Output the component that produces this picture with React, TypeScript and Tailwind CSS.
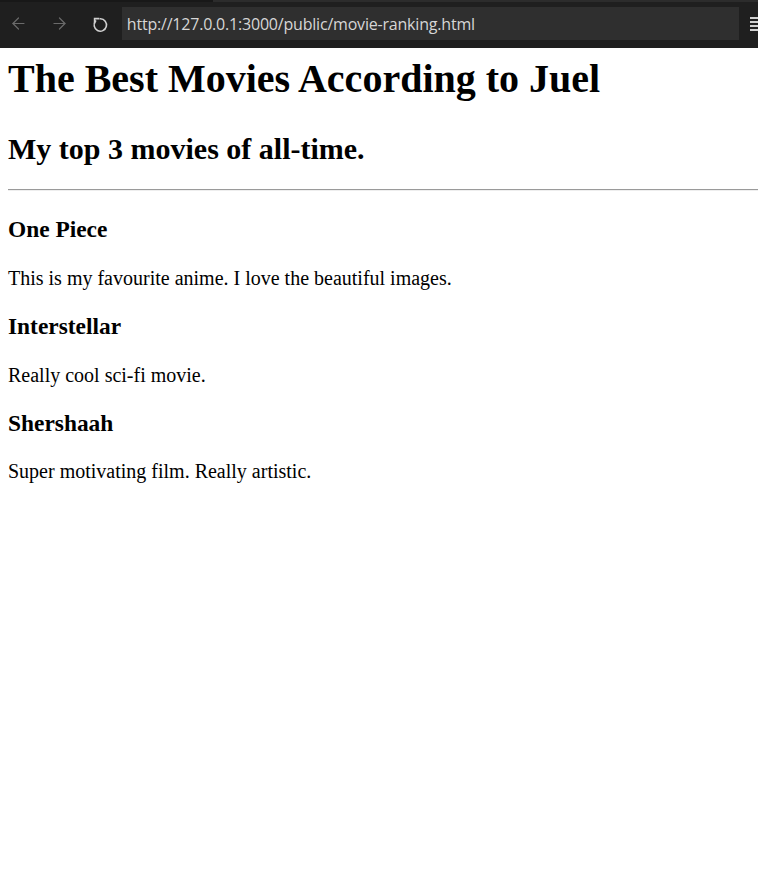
import { ArrowLeft, ArrowRight } from "lucide-react";

const movies = [
  { title: "One Piece", note: "This is my favourite anime. I love the beautiful images." },
  { title: "Interstellar", note: "Really cool sci-fi movie." },
  { title: "Shershaah", note: "Super motivating film. Really artistic." },
];

function RefreshIcon() {
  return (
    <svg viewBox="0 0 18 18" className="ml-[22px] w-[18px] h-[18px] text-[#d0d0d0]" fill="none" stroke="currentColor" strokeWidth={1.6} strokeLinecap="square">
      <path d="M9.5 3.8 A6.2 6.2 0 1 1 4.6 6" />
      <path d="M3.6 7.6 V3.6 H7.6" />
    </svg>
  );
}

function BrowserBar() {
  return (
    <div className="h-12 w-full bg-[#1f1f1f] flex flex-col overflow-hidden">
      {/* tab strip edge */}
      <div className="h-[2px] flex">
        <div className="w-[213px] bg-[#181818]" />
        <div className="flex-1 bg-[#2c2c2c]" />
      </div>
      <div className="flex items-center h-[33px] mt-[5px]">
        <ArrowLeft className="ml-[9px] w-[19px] h-[19px] text-[#6a6a6a]" strokeWidth={1.5} />
        <ArrowRight className="ml-[22px] w-[19px] h-[19px] text-[#6a6a6a]" strokeWidth={1.5} />
        <RefreshIcon />
        <div className="ml-[13px] w-[620px] h-[33px] bg-[#2f2f2f] flex items-center pl-[5px]">
          <span className="text-[16px] text-[#d6d6d6] font-['Open_Sans',sans-serif] tracking-[-0.2px]">
            http://127.0.0.1:3000/public/movie-ranking.html
          </span>
        </div>
        <div className="ml-[11px] flex flex-col gap-[2px]">
          <div className="w-[8px] h-[2px] bg-[#d0d0d0]" />
          <div className="w-[8px] h-[2px] bg-[#d0d0d0]" />
          <div className="w-[8px] h-[2px] bg-[#d0d0d0]" />
          <div className="w-[8px] h-[2px] bg-[#d0d0d0]" />
        </div>
      </div>
    </div>
  );
}

export default function App() {
  return (
    <div className="w-[758px] h-[885px] bg-white overflow-hidden">
      <BrowserBar />
      <div className="pl-2 pt-2 text-black font-['Liberation_Serif',serif]">
        <h1 className="text-[40px] leading-[46px] font-bold mb-[29px]">The Best Movies According to Juel</h1>
        <h2 className="text-[30px] leading-[35px] font-bold mb-[23px]">My top 3 movies of all-time.</h2>
        <hr className="border-0 border-t border-t-[#9a9a9a] border-b border-b-[#eeeeee] h-[2px] mb-[25.4px]" />
        {movies.map((m) => (
          <div key={m.title}>
            <h3 className="text-[23.4px] leading-[27px] font-bold my-[23.4px]">{m.title}</h3>
            <p className="text-[20px] leading-[23px] my-[20px]">{m.note}</p>
          </div>
        ))}
      </div>
    </div>
  );
}
